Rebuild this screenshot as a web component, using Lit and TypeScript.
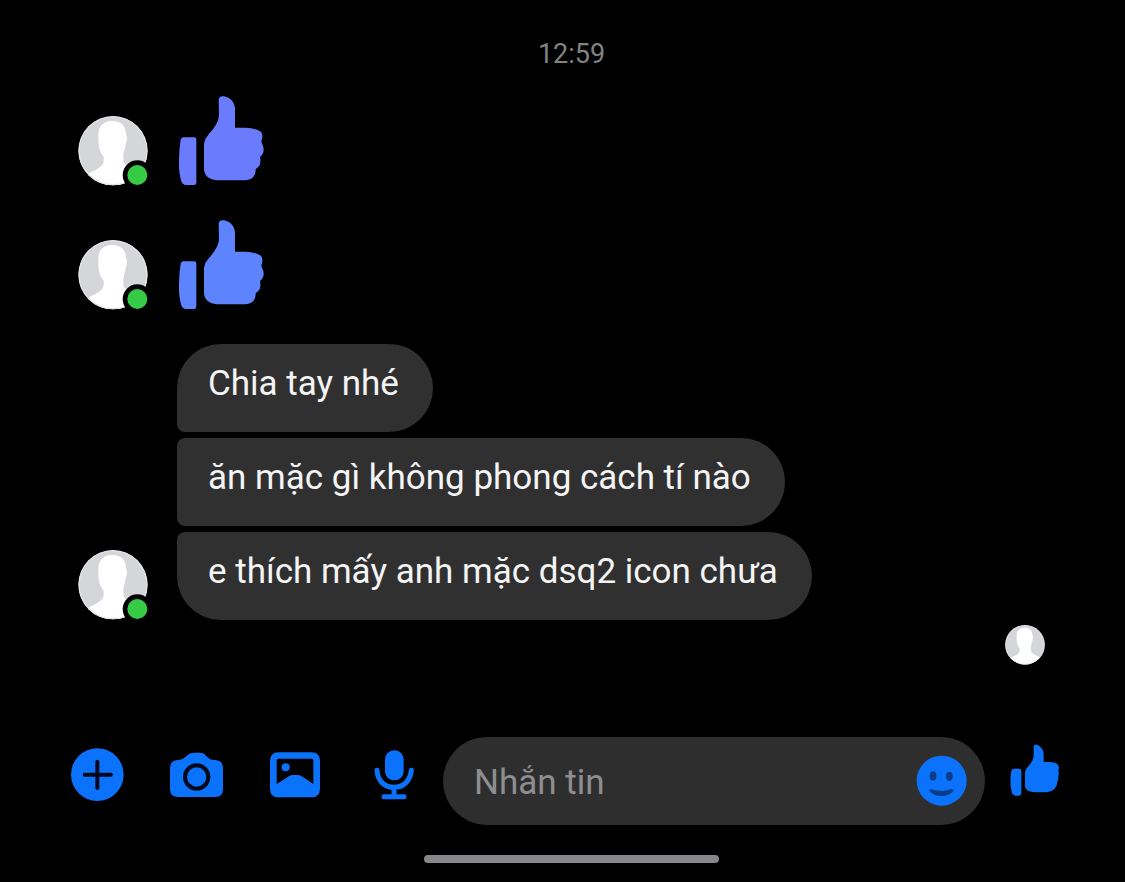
import { LitElement, html, css, svg } from "lit";
import { customElement, property } from "lit/decorators.js";

@customElement("chat-avatar")
class ChatAvatar extends LitElement {
  @property({ type: Boolean }) online = false;

  static styles = css`
    :host {
      display: block;
      flex: none;
      width: 70px;
      height: 70px;
    }
    .face {
      display: block;
      width: 100%;
      height: 100%;
    }
  `;

  render() {
    return html`
      <svg class="face" viewBox="0 0 210 210" role="img" aria-label="Avatar">
        <defs>
          <clipPath id="disc"><circle cx="105" cy="104" r="104" /></clipPath>
        </defs>
        <g clip-path="url(#disc)">
          <rect width="210" height="210" fill="#d5d6da" />
          <path
            fill="#fff"
            d="M61 58 C61 28 78 15 103 15 C129 15 144 30 144 54 C149 64 147 76 143 84 C141 98 137 108 136 118 V134 C138 150 160 156 175 166 Q196 178 200 210 H10 Q20 176 44 166 C62 158 77 148 77 134 V122 C66 110 60 92 61 58 Z"
          />
          <circle cx="105" cy="104" r="102" fill="none" stroke="#e4e4e7" stroke-width="4" />
        </g>
        ${this.online
          ? svg`<circle cx="178" cy="177" r="44" fill="#000"></circle>
              <circle cx="178" cy="177" r="30" fill="#35cb45"></circle>`
          : null}
      </svg>
    `;
  }
}

@customElement("app-root")
class AppRoot extends LitElement {
  static styles = css`
    :host {
      display: flex;
      flex-direction: column;
      box-sizing: border-box;
      min-height: 100vh;
      padding: 38px 0 19px;
      background: #000;
      color: #f4f4f5;
      font-family: Roboto, "Noto Sans", sans-serif;
      font-size: 35px;
      line-height: 42px;
    }
    .thread {
      display: flex;
      flex-direction: column;
      padding: 0 60px 0 78px;
    }
    .time {
      margin-bottom: 26px;
      text-align: center;
      font-size: 27px;
      line-height: 32px;
      color: #828284;
    }
    .row {
      display: flex;
      align-items: flex-end;
      gap: 29px;
      margin-bottom: 34px;
    }
    .row.last {
      margin-bottom: 5px;
    }
    .like {
      display: block;
      width: 88px;
      height: 90px;
    }
    .like.violet {
      fill: #6a7bfe;
    }
    .like.blue {
      fill: #5d83fe;
    }
    .bubbles {
      display: flex;
      flex-direction: column;
      align-items: flex-start;
      gap: 6px;
    }
    .bubble {
      padding: 19px 34px 27px 31px;
      border-radius: 8px 44px 44px 8px;
      background: #303031;
    }
    .bubble:first-child {
      border-top-left-radius: 44px;
    }
    .bubble:last-child {
      border-bottom-left-radius: 44px;
    }
    .seen {
      align-self: flex-end;
      width: 40px;
      height: 40px;
      margin-right: 20px;
    }
    .composer {
      display: flex;
      align-items: center;
      margin-top: auto;
      padding: 0 65px 0 70px;
    }
    .tools {
      display: flex;
      gap: 45px;
      margin-right: 22px;
      padding-bottom: 12px;
    }
    button {
      display: block;
      flex: none;
      padding: 0;
      border: 0;
      background: none;
      cursor: pointer;
    }
    .icon {
      display: block;
      width: 54px;
      height: 54px;
      fill: #0b72fb;
    }
    .cut {
      fill: none;
      stroke: #00081c;
      stroke-width: 12;
      stroke-linecap: round;
    }
    .line {
      fill: none;
      stroke: #0b72fb;
      stroke-width: 15;
      stroke-linecap: round;
    }
    .field {
      display: flex;
      flex: 1;
      align-items: center;
      min-width: 0;
      height: 88px;
      box-sizing: border-box;
      padding: 0 18px 0 31px;
      border-radius: 44px;
      background: #2e2e2f;
    }
    .input {
      flex: 1;
      min-width: 0;
      padding: 4px 0 0;
      border: 0;
      outline: 0;
      background: none;
      color: #f4f4f5;
      font: inherit;
    }
    .input::placeholder {
      color: #8e8e91;
      opacity: 1;
    }
    .emoji {
      width: 52px;
      height: 52px;
    }
    .send {
      margin-left: 24px;
      padding-bottom: 22px;
    }
    .thumb {
      width: 51px;
      height: 54px;
    }
    .home {
      width: 295px;
      height: 8px;
      margin: 30px auto 0;
      border-radius: 4px;
      background: #87878a;
    }
    .homebar {
      padding: 0 60px 0 78px;
    }
  `;

  private like(tone: string) {
    return html`
      <svg class="like ${tone}" viewBox="351 47 264 270" role="img" aria-label="Like">
        <path
          d="M370 171 H403 Q409 171 409 177 V307 Q409 314 402 314 H378 Q368 314 364 303 Q356 280 357 240 Q357 205 362 178 Q364 171 370 171 Z"
        />
        <path
          d="M476 55 Q480 46 492 48 C512 52 524 66 525 85 V142 H556 C580 143 596 149 604 156 Q610 166 605 180 Q603 185 607 192 Q614 206 609 219 Q606 226 600 230 Q603 244 599 255 Q595 262 587 267 Q588 280 580 290 Q572 299 555 300 H470 Q436 298 432 270 V190 Q434 175 446 162 Q476 130 477 105 Z"
        />
      </svg>
    `;
  }

  render() {
    const texts = [
      "Chia tay nhé",
      "ăn mặc gì không phong cách tí nào",
      "e thích mấy anh mặc dsq2 icon chưa",
    ];
    return html`
      <main class="thread">
        <time class="time">12:59</time>
        <div class="row">
          <chat-avatar online></chat-avatar>
          ${this.like("violet")}
        </div>
        <div class="row">
          <chat-avatar online></chat-avatar>
          ${this.like("blue")}
        </div>
        <div class="row last">
          <chat-avatar online></chat-avatar>
          <div class="bubbles">
            ${texts.map((text) => html`<div class="bubble">${text}</div>`)}
          </div>
        </div>
        <chat-avatar class="seen"></chat-avatar>
      </main>

      <form class="composer" @submit=${(e: Event) => e.preventDefault()}>
        <div class="tools">
          <button type="button" aria-label="Thêm">
            <svg class="icon" viewBox="30 39 162 162">
              <circle cx="112" cy="119" r="79" />
              <path class="cut" d="M74 119 H153 M112 80 V159" />
            </svg>
          </button>
          <button type="button" aria-label="Máy ảnh">
            <svg class="icon" viewBox="327 39 162 162">
              <path
                d="M352 75 C365 75 372 70 380 62 Q388 53 400 53 H420 Q432 53 438 62 C446 70 452 75 466 75 Q489 77 489 98 V162 Q489 186 466 186 H354 Q330 186 330 162 V98 Q330 77 352 75 Z"
              />
              <circle class="cut" cx="410" cy="126" r="35" />
            </svg>
          </button>
          <button type="button" aria-label="Ảnh">
            <svg class="icon" viewBox="54 39 162 162">
              <path
                fill-rule="evenodd"
                d="M86 52 H184 Q210 52 210 78 V161 Q210 187 184 187 H86 Q60 187 60 161 V78 Q60 52 86 52 Z M85 71 Q80 71 80 76 V147 L110 128 Q117 120 127 120 H144 Q152 120 159 126 L190 147 V76 Q190 71 185 71 Z"
              />
              <circle cx="107" cy="97" r="12" />
            </svg>
          </button>
          <button type="button" aria-label="Ghi âm">
            <svg class="icon" viewBox="351 39 162 162">
              <rect x="405" y="46" width="56" height="90" rx="27" />
              <path class="line" d="M381 106 C383 138 404 157 432 157 C460 157 481 138 484 106 M432 157 V182 M402 185 H462" />
            </svg>
          </button>
        </div>
        <div class="field">
          <input class="input" type="text" placeholder="Nhắn tin" aria-label="Nhắn tin" />
          <button type="button" aria-label="Biểu tượng cảm xúc">
            <svg class="icon emoji" viewBox="75 89 156 156">
              <circle cx="155" cy="166" r="75" />
              <ellipse cx="129" cy="152" rx="10" ry="14" fill="#0a3d84" />
              <ellipse cx="178" cy="153" rx="10" ry="14" fill="#0a3d84" />
              <path
                fill="#0a3d84"
                d="M124 191 Q154 203 184 191 Q191 190 190 197 Q178 212 154 212 Q130 212 119 197 Q117 190 124 191 Z"
              />
            </svg>
          </button>
        </div>
        <button class="send" type="button" aria-label="Thích">
          <svg class="icon thumb" viewBox="357 52 153 162">
            <path
              d="M372 129 H386 Q394 129 394 137 V201 Q394 210 386 210 H376 Q368 209 365 199 Q358 168 364 136 Q366 129 372 129 Z"
            />
            <path
              d="M431 62 Q433 54 441 57 C455 63 461 74 461 88 V109 H480 C494 109 504 114 506 122 Q508 127 505 134 Q508 142 505 152 Q506 160 502 168 Q502 180 495 188 Q487 198 468 200 H436 Q408 198 405 183 V139 Q406 131 413 124 C426 110 432 100 431 82 Z"
            />
          </svg>
        </button>
      </form>
      <div class="homebar"><div class="home"></div></div>
    `;
  }
}
